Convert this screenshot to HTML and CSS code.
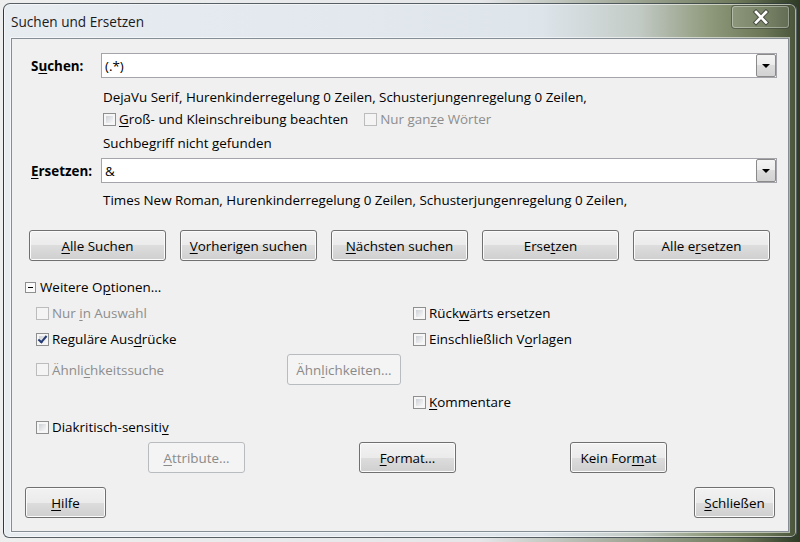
FILE: index.html
```html
<!DOCTYPE html>
<html lang="de">
<head>
    <meta charset="UTF-8">
    <title>Suchen und Ersetzen</title>
    <link rel="stylesheet" href="styles.css">
</head>
<body>

<div class="window">
    <div class="titlebar">
        <span class="title">Suchen und Ersetzen</span>
        <div class="close-btn">
            <svg width="18" height="17" viewBox="0 0 18 17">
                <path d="M4 3 L14 13.5 M14 3 L4 13.5" stroke="#4a4f46" stroke-width="4.6" stroke-linecap="square" fill="none"/>
                <path d="M4 3 L14 13.5 M14 3 L4 13.5" stroke="#ffffff" stroke-width="2.6" stroke-linecap="square" fill="none"/>
            </svg>
        </div>
    </div>

    <div class="client">
        <!-- Suchen -->
        <div class="field-row">
            <span class="field-label">S<u>u</u>chen:</span>
            <div class="combo">
                <span class="combo-text">(.*)</span>
                <span class="combo-arrow"></span>
            </div>
        </div>
        <div class="field-info">
            <div class="info-line">DejaVu Serif, Hurenkinderregelung 0 Zeilen, Schusterjungenregelung 0 Zeilen,</div>
            <div class="check-line">
                <label class="check"><span class="box"></span><span><u>G</u>roß- und Kleinschreibung beachten</span></label>
                <label class="check disabled"><span class="box"></span><span>Nur gan<u>z</u>e Wörter</span></label>
            </div>
            <div class="info-line status">Suchbegriff nicht gefunden</div>
        </div>

        <!-- Ersetzen -->
        <div class="field-row replace">
            <span class="field-label"><u>E</u>rsetzen:</span>
            <div class="combo">
                <span class="combo-text">&amp;</span>
                <span class="combo-arrow"></span>
            </div>
        </div>
        <div class="field-info">
            <div class="info-line times">Times New Roman, Hurenkinderregelung 0 Zeilen, Schusterjungenregelung 0 Zeilen,</div>
        </div>

        <!-- Hauptaktionen -->
        <div class="action-row">
            <button class="btn wide"><u>A</u>lle Suchen</button>
            <button class="btn wide"><u>V</u>orherigen suchen</button>
            <button class="btn wide"><u>N</u>ächsten suchen</button>
            <button class="btn wide">Erse<u>t</u>zen</button>
            <button class="btn wide">Alle e<u>r</u>setzen</button>
        </div>

        <!-- Weitere Optionen -->
        <div class="expander">
            <span class="expander-box"></span>
            <span>Weitere O<u>p</u>tionen...</span>
        </div>

        <div class="options-grid">
            <div class="opt"><label class="check disabled"><span class="box"></span><span>Nur <u>i</u>n Auswahl</span></label></div>
            <div class="opt"><label class="check"><span class="box"></span><span>Rück<u>w</u>ärts ersetzen</span></label></div>

            <div class="opt"><label class="check"><span class="box checked"></span><span>Reguläre Aus<u>d</u>rücke</span></label></div>
            <div class="opt"><label class="check"><span class="box"></span><span>Einschließlich V<u>o</u>rlagen</span></label></div>

            <div class="opt similar">
                <label class="check disabled"><span class="box"></span><span>Ähnli<u>c</u>hkeitssuche</span></label>
                <button class="btn similar-btn" disabled>Ähn<u>l</u>ichkeiten...</button>
            </div>
            <div class="opt"></div>

            <div class="opt"></div>
            <div class="opt"><label class="check"><span class="box"></span><span><u>K</u>ommentare</span></label></div>

            <div class="opt"><label class="check"><span class="box"></span><span>Diakritisch-sensiti<u>v</u></span></label></div>
            <div class="opt"></div>
        </div>

        <div class="format-row">
            <button class="btn small" disabled><u>A</u>ttribute...</button>
            <button class="btn small"><u>F</u>ormat...</button>
            <button class="btn small">Kein For<u>m</u>at</button>
        </div>

        <div class="footer-row">
            <button class="btn small"><u>H</u>ilfe</button>
            <button class="btn small"><u>S</u>chließen</button>
        </div>
    </div>
</div>

</body>
</html>
```

FILE: styles.css
```css
body {
    margin: 0;
    width: 800px;
    height: 542px;
    overflow: hidden;
    font-family: "Open Sans", "Noto Sans", sans-serif;
    font-size: 13.4px;
    color: #000000;
    background: linear-gradient(to right, #eeeeee 0%, #e4e6e8 60%, #6f7a5c 92%, #2f3a26 100%);
}
u {
    text-decoration: underline;
    text-underline-offset: 2px;
}
.window {
    margin: 3px 3px 0 3px;
    width: 794px;
    height: 535px;
    box-sizing: border-box;
    padding: 0 7px 5px 7px;
    border: 1px solid rgba(40, 50, 55, 0.75);
    border-radius: 7px 7px 6px 6px;
    background: linear-gradient(to right, #e7ecf1 0%, #e2e8ee 45%, #dde4ea 68%, #c3cbc6 80%, #8f9a7c 89%, #6a7656 96%, #4a553b 100%);
    box-shadow: inset 0 0 0 1px rgba(255, 255, 255, 0.55);
}
.titlebar {
    height: 34px;
    display: flex;
    justify-content: space-between;
    align-items: flex-start;
}
.title {
    padding-top: 8px;
    font-size: 13.6px;
    color: #1a1a1a;
}
.close-btn {
    width: 59px;
    height: 24px;
    margin-top: 1px;
    margin-right: -1px;
    box-sizing: border-box;
    border: 1px solid rgba(30, 35, 30, 0.45);
    border-radius: 4px;
    background: rgba(255, 255, 255, 0.1);
    box-shadow: inset 0 0 0 1px rgba(255, 255, 255, 0.35);
    display: flex;
    align-items: center;
    justify-content: center;
}
.client {
    height: 494px;
    box-sizing: border-box;
    border: 1px solid #858d95;
    box-shadow: 0 0 0 1px rgba(255, 255, 255, 0.55);
    background-color: #f0f0f0;
    padding: 14px 11px 0 13px;
}

/* Eingabefelder */
.field-row {
    display: flex;
    align-items: center;
    padding-left: 6px;
}
.field-row.replace {
    margin-top: 4px;
}
.field-label {
    width: 70px;
    font-weight: bold;
}
.combo {
    flex: 1;
    height: 25px;
    box-sizing: border-box;
    border: 1px solid #a3a5aa;
    background-color: #ffffff;
    display: flex;
    align-items: center;
    justify-content: space-between;
}
.combo-text {
    padding-left: 3px;
}
.combo-arrow {
    width: 20px;
    height: 23px;
    box-sizing: border-box;
    border: 1px solid #8a8a8a;
    border-radius: 2px;
    background: linear-gradient(#f4f4f4 0%, #ececec 50%, #dcdcdc 50%, #d2d2d2 100%);
    position: relative;
}
.combo-arrow::after {
    content: "";
    position: absolute;
    left: 5px;
    top: 9px;
    border-left: 4px solid transparent;
    border-right: 4px solid transparent;
    border-top: 4px solid #000000;
}
.field-info {
    padding-left: 78px;
}
.info-line {
    height: 22px;
    line-height: 22px;
    margin-top: 8px;
}
.info-line.status {
    margin-top: 2px;
}
.info-line.times {
    margin-top: 6px;
}
.check-line {
    height: 22px;
    display: flex;
    gap: 16px;
}

/* Checkboxen */
.check {
    display: flex;
    align-items: center;
    gap: 3px;
    line-height: 22px;
}
.check.disabled {
    color: #8d8d8d;
}
.box {
    width: 13px;
    height: 13px;
    box-sizing: border-box;
    padding: 2px;
    border: 1px solid #8e8f8f;
    background: linear-gradient(135deg, #cdd1d6, #f8f8f8) content-box, #f6f6f6;
    position: relative;
    flex-shrink: 0;
}
.check.disabled .box {
    border-color: #bcbcbc;
    background: #f4f4f4;
}
.box.checked::after {
    content: "";
    position: absolute;
    left: 3px;
    top: 0px;
    width: 3px;
    height: 7px;
    border-right: 2px solid #263b74;
    border-bottom: 2px solid #263b74;
    transform: rotate(40deg);
}

/* Buttons */
.btn {
    font-family: inherit;
    font-size: 13.4px;
    color: #000000;
    height: 31px;
    padding: 0;
    border: 1px solid #707070;
    border-radius: 3px;
    background: linear-gradient(#f2f2f2 0%, #ebebeb 50%, #dddddd 50%, #cfcfcf 100%);
    box-shadow: inset 0 0 0 1px #fbfbfb;
}
.btn:disabled {
    color: #8a8a8a;
    border-color: #b8bcbf;
    background: #f4f4f4;
    box-shadow: none;
}
.btn.wide {
    width: 137px;
}
.btn.small {
    width: 97px;
}
.action-row {
    display: flex;
    gap: 14px;
    margin-top: 19px;
    padding-left: 4px;
}

/* Weitere Optionen */
.expander {
    display: flex;
    align-items: center;
    gap: 4px;
    height: 22px;
    margin-top: 15px;
}
.expander-box {
    width: 11px;
    height: 11px;
    box-sizing: border-box;
    border: 1px solid #8f8f8f;
    background-color: #fafafa;
    position: relative;
}
.expander-box::after {
    content: "";
    position: absolute;
    left: 2px;
    top: 4px;
    width: 5px;
    height: 1px;
    background-color: #000000;
}
.options-grid {
    display: grid;
    grid-template-columns: 377px 1fr;
    grid-template-rows: 26px 26px 35px 30px 20px;
    margin-top: 2px;
    padding-left: 11px;
}
.opt {
    display: flex;
    align-items: center;
}
.opt.similar {
    justify-content: space-between;
    padding-right: 12px;
}
.btn.similar-btn {
    width: 114px;
}
.format-row {
    display: flex;
    gap: 114px;
    margin-top: 5px;
    padding-left: 123px;
}
.footer-row {
    display: flex;
    justify-content: space-between;
    margin-top: 14px;
    padding-right: 2px;
}
.footer-row .btn.small {
    width: 81px;
}
```
